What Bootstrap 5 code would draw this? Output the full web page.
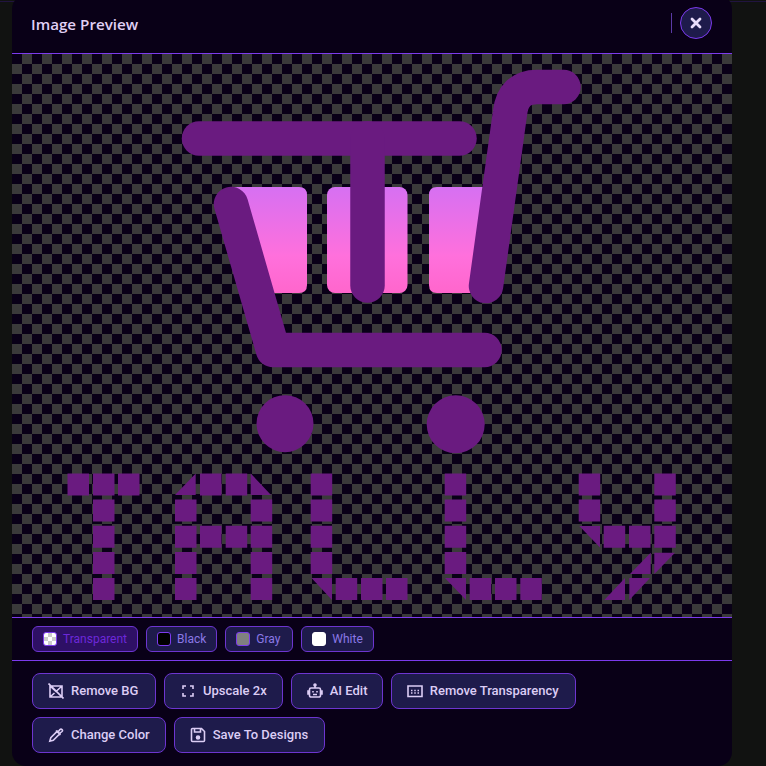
<!DOCTYPE html>
<html>
  <head>
    <meta charset="UTF-8" />
    <meta name="viewport" content="width=device-width, initial-scale=1.0" />
    <title>Image Preview</title>
    <link href="https://cdn.jsdelivr.net/npm/bootstrap@5.3.0/dist/css/bootstrap.min.css" rel="stylesheet" />
    <style>
      html, body {
        height: 766px;
        overflow: hidden;
        background: #111211;
      }
      .backdrop-page {
        height: 766px;
        padding: 0 34px 0 12px;
        border-top: 1px solid #21143f;
        margin-top: 1px;
      }
      .preview-panel {
        margin-top: -7px;
        height: 771px;
        background: #090017;
        border-radius: 14px;
        overflow: hidden;
        color: #e0d0f5;
        font-family: "Roboto", "Liberation Sans", sans-serif;
      }
      .preview-head {
        height: 59px;
        padding: 4px 20px 6px 19px;
        border-bottom: 1px solid #7c3aed;
      }
      .preview-title {
        font-family: "Open Sans", "Liberation Sans", sans-serif;
        font-size: 15.2px;
        font-weight: 600;
        color: #e0d0f5;
        margin: 2px 0 0;
      }
      .head-sep {
        width: 1px;
        height: 20px;
        background: #5b3aa6;
      }
      .close-round {
        width: 32px;
        height: 32px;
        border-radius: 50%;
        background: #1e1b4b;
        border: 1px solid #7c3aed;
        padding: 0;
      }
      .checker-area {
        height: 564px;
        background-color: #090017;
        background-image: repeating-conic-gradient(#3a3a3a 0 25%, #090017 0 50%);
        background-size: 20px 20px;
        border-bottom: 1px solid #7c3aed;
      }
      .checker-area svg {
        display: block;
      }
      .bg-row {
        height: 43px;
        padding: 0 20px;
        border-bottom: 1px solid #7c3aed;
      }
      .bg-chip {
        height: 26px;
        padding: 0 10px;
        gap: 6px;
        background: #1e1b4b;
        border: 1px solid #6d35d0;
        border-radius: 6px;
        color: #8b78e6;
        font-size: 12px;
        line-height: 1;
      }
      .bg-chip.is-on {
        background: #2e1065;
        color: #6d28d9;
      }
      .bg-chip:nth-child(3) { width: 68px; }
      .bg-chip:nth-child(4) { width: 73px; }
      .swatch {
        width: 14px;
        height: 14px;
        border-radius: 3px;
        border: 1px solid #7c3aed;
      }
      .swatch-clear {
        background-color: #fff;
        background-image: repeating-conic-gradient(#ccc 0 25%, #fff 0 50%);
        background-size: 8px 8px;
      }
      .swatch-black { background: #000; }
      .swatch-gray { background: #808080; }
      .swatch-white { background: #fff; border-color: #fff; }
      .action-row {
        padding: 12px 20px 0;
      }
      .action-btn {
        height: 36px;
        padding: 0 15px 1px;
        gap: 7px;
        background: #1e1b4b;
        border: 1px solid #6d35d0;
        border-radius: 8px;
        color: #dccdf5;
        font-size: 13px;
        font-weight: 500;
        line-height: 1;
        white-space: nowrap;
      }
      .action-btn:nth-child(1) { width: 124px; }
      .action-btn:nth-child(3) { width: 92px; }
      .action-btn:nth-child(4) { width: 185px; }
      .action-btn:nth-child(6) { width: 151px; }
      .action-btn svg {
        width: 16px;
        height: 16px;
        flex: none;
        fill: none;
        stroke: currentColor;
        stroke-width: 1.6;
      }
    </style>
  </head>
  <body>
    <div class="backdrop-page">
      <div class="preview-panel d-flex flex-column">
        <div class="preview-head d-flex align-items-center">
          <h5 class="preview-title me-auto">Image Preview</h5>
          <div class="head-sep me-2"></div>
          <button type="button" class="close-round d-flex align-items-center justify-content-center" aria-label="Close">
            <svg width="12" height="12" viewBox="0 0 12 12"><path d="M2 2l8 8M10 2l-8 8" stroke="#e9dcfb" stroke-width="2.800" stroke-linecap="round" /></svg>
          </button>
        </div>

        <div class="checker-area">
          <svg width="720" height="563" viewBox="12 54 720 563">
            <defs>
              <linearGradient id="basketFill" x1="0" y1="187" x2="0" y2="293" gradientUnits="userSpaceOnUse">
                <stop offset="0" stop-color="#d670f2" />
                <stop offset="0.65" stop-color="#ff70dc" />
                <stop offset="1" stop-color="#ff66cc" />
              </linearGradient>
            </defs>
            <!-- basket slots -->
            <path fill="url(#basketFill)" d="M233 187H299Q307 187 307 195V285Q307 293 299 293H262Z" />
            <rect fill="url(#basketFill)" x="327" y="187" width="80.500" height="106" rx="8" />
            <path fill="url(#basketFill)" d="M437 187H490L478 293H437Q429 293 429 285V195Q429 187 437 187Z" />
            <!-- cart strokes -->
            <g fill="none" stroke="#6a1b80" stroke-width="34.500" stroke-linecap="round" stroke-linejoin="round">
              <path d="M199 138.500H459.500" />
              <path d="M367.500 138.500V285.500" />
              <path d="M486 286L510 113Q513 87 537 87H563.500" />
              <path d="M231 204L273 350H484.500" />
            </g>
            <circle cx="285" cy="423.700" r="28.500" fill="#6a1b80" />
            <circle cx="455.700" cy="424.300" r="29" fill="#6a1b80" />
            <!-- TALLY pixel letters -->
            <g fill="#6a1b80">
              <path id="letterT" d="M67.500 473.500h21.500v22h-21.500zM93 473.500h21.500v22h-21.500zM118 473.500h21.500v22h-21.500zM93 499.500h21.500v22h-21.500zM93 525.700h21.500v22h-21.500zM93 552h21.500v22h-21.500zM93 578h21.500v22h-21.500z" />
              <path id="letterA" d="M195.700 473.500V495H175ZM200 473.500h21.500v22h-21.500zM225.700 473.500h21.500v22h-21.500zM250.700 473.500V495H271ZM175 499.500h21.500v22h-21.500zM250.700 499.500h21.500v22h-21.500zM175 525.700h21.500v22h-21.500zM200 525.700h21.500v22h-21.500zM225.700 525.700h21.500v22h-21.500zM250.700 525.700h21.500v22h-21.500zM175 552h21.500v22h-21.500zM250.700 552h21.500v22h-21.500zM175 578h21.500v22h-21.500zM250.700 578h21.500v22h-21.500z" />
              <path id="letterL" d="M310.700 473.500h21.500v22h-21.500zM310.700 499.500h21.500v22h-21.500zM310.700 525.700h21.500v22h-21.500zM310.700 552h21.500v22h-21.500zM311.500 578H332V600ZM335.700 578h21.500v22h-21.500zM361 578h21.500v22h-21.500zM386 578h21.500v22h-21.500z" />
              <path id="letterL2" d="M444.700 473.500h21.500v22h-21.500zM444.700 499.500h21.500v22h-21.500zM444.700 525.700h21.500v22h-21.500zM444.700 552h21.500v22h-21.500zM445 578H466V600ZM469.700 578h21.500v22h-21.500zM495 578h21.500v22h-21.500zM520.300 578h21.500v22h-21.500z" />
              <path id="letterY" d="M578.700 473.500h21.500v22h-21.500zM654.300 473.500h21.500v22h-21.500zM578.700 499.500h21.500v22h-21.500zM654.300 499.500h21.500v22h-21.500zM579.300 526H600V547.500ZM603.700 525.700h21.500v22h-21.500zM629 525.700h21.500v22h-21.500zM654.300 525.700h21.500v22h-21.500zM650.700 552.700V574H630ZM654.300 552.700H675L654.300 574ZM625 578V600H604.300ZM629.300 578H650L629.300 600Z" />
            </g>
          </svg>
        </div>

        <div class="bg-row d-flex align-items-center gap-2">
          <button type="button" class="bg-chip is-on d-flex align-items-center"><span class="swatch swatch-clear"></span>Transparent</button>
          <button type="button" class="bg-chip d-flex align-items-center"><span class="swatch swatch-black"></span>Black</button>
          <button type="button" class="bg-chip d-flex align-items-center"><span class="swatch swatch-gray"></span>Gray</button>
          <button type="button" class="bg-chip d-flex align-items-center"><span class="swatch swatch-white"></span>White</button>
        </div>

        <div class="action-row d-flex flex-wrap gap-2">
          <button type="button" class="action-btn d-flex align-items-center">
            <svg viewBox="0 0 16 16"><path d="M2 3h12v11H2zM2 3l6 5.500L14 3M2 14l4.500-4M0.500 0.500l15 15" /></svg>Remove BG
          </button>
          <button type="button" class="action-btn d-flex align-items-center">
            <svg viewBox="0 0 16 16"><path d="M3 6V3h3M10 3h3v3M13 10v3h-3M6 13H3v-3" /></svg>Upscale 2x
          </button>
          <button type="button" class="action-btn d-flex align-items-center">
            <svg viewBox="0 0 16 16"><path d="M4 5h8a1.500 1.500 0 0 1 1.500 1.500v6A1.500 1.500 0 0 1 12 14H4a1.500 1.500 0 0 1-1.500-1.500v-6A1.500 1.500 0 0 1 4 5zM8 5V3M2.500 8H1v3h1.500M13.500 8H15v3h-1.500M6 8v1.500M10 8v1.500M6 11.500h4" /><circle cx="8" cy="2" r="1" fill="currentColor" /></svg>AI Edit
          </button>
          <button type="button" class="action-btn d-flex align-items-center">
            <svg viewBox="0 0 16 16"><path d="M1 3h14v10.500H1zM4 7.500h1.500M7.250 7.500h1.500M10.500 7.500H12M4 10h1.500M7.250 10h1.500M10.500 10H12" /></svg>Remove Transparency
          </button>
          <button type="button" class="action-btn d-flex align-items-center">
            <svg viewBox="0 0 16 16"><path d="M1.800 14.200l1-3.500 6.500-6.500 2.500 2.500-6.500 6.500zM8 3.500l4.500 4.500M10 5l2-2.500a1.400 1.400 0 0 1 2 2L11.500 6.500" /></svg>Change Color
          </button>
          <button type="button" class="action-btn d-flex align-items-center">
            <svg viewBox="0 0 16 16"><path d="M2.500 1.500h9l3 3v9a1 1 0 0 1-1 1h-11a1 1 0 0 1-1-1v-11a1 1 0 0 1 1-1zM4.500 1.500v3.500h6v-3.500" /><circle cx="8" cy="10.500" r="1.500" fill="currentColor" /></svg>Save To Designs
          </button>
        </div>
      </div>
    </div>
    <script src="https://cdn.jsdelivr.net/npm/bootstrap@5.3.0/dist/js/bootstrap.bundle.min.js"></script>
  </body>
</html>
